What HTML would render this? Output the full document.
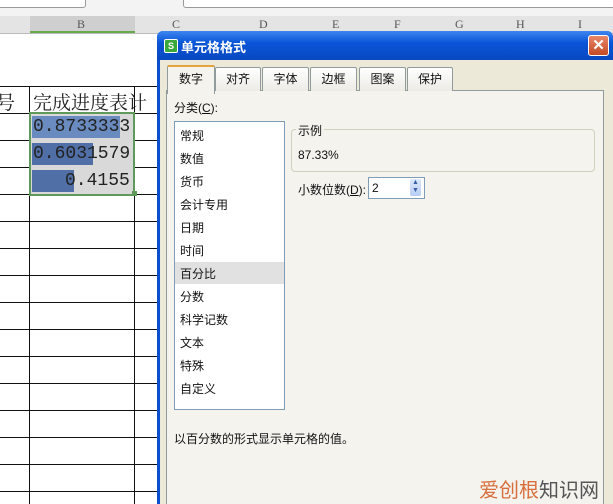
<!DOCTYPE html>
<html><head><meta charset="utf-8"><style>
html,body{margin:0;width:613px;height:504px;overflow:hidden;}
body{position:relative;background:#fff;font-family:"Liberation Sans","Noto Sans CJK SC",sans-serif;}
.a{position:absolute;}
.hl{position:absolute;height:1px;background:#111;}
.vl{position:absolute;width:1px;background:#111;}
.cjk{font-family:"Liberation Sans","Noto Sans CJK SC",sans-serif;font-size:12px;color:#111;}
.tab{position:absolute;top:67px;height:23px;border:1px solid #919b9c;border-bottom:none;background:linear-gradient(#fff,#ecebe5);font-size:12px;line-height:22px;text-align:center;border-radius:2px 2px 0 0;}
.item{position:absolute;left:5px;font-size:12px;color:#111;}
.mono{font-family:"Liberation Serif","Noto Serif CJK SC",serif;font-size:19px;color:#222;}
.num{font-family:"Liberation Mono",monospace;font-size:18px;color:#222;}
.col{position:absolute;top:17px;font-size:12px;color:#555;font-family:'Liberation Serif',serif;}
</style></head><body>
<div class="a" style="left:0;top:0;width:613px;height:16px;background:#f3f3f3;"></div>
<div class="a" style="left:-4px;top:-6px;width:88px;height:12px;border:1px solid #999;border-radius:3px;background:#fff;"></div>
<div class="a" style="left:183px;top:-6px;width:430px;height:12px;border:1px solid #999;border-radius:3px;background:#fff;"></div>
<div class="a" style="left:0;top:16px;width:613px;height:17px;background:#e4e4e4;border-bottom:1px solid #bbb;"></div>
<div class="a" style="left:30px;top:16px;width:105px;height:15px;background:#cfcfcf;border-bottom:2px solid #6aa84f;"></div>
<div class="col" style="left:77px;">B</div>
<div class="col" style="left:172px;">C</div>
<div class="col" style="left:259px;">D</div>
<div class="col" style="left:332px;">E</div>
<div class="col" style="left:394px;">F</div>
<div class="col" style="left:455px;">G</div>
<div class="col" style="left:516px;">H</div>
<div class="col" style="left:578px;">I</div>
<div class="vl" style="left:29px;top:86px;height:418px;"></div>
<div class="vl" style="left:134px;top:86px;height:418px;"></div>
<div class="hl" style="left:0;top:86px;width:160px;"></div>
<div class="hl" style="left:0;top:113px;width:160px;"></div>
<div class="hl" style="left:0;top:140px;width:160px;"></div>
<div class="hl" style="left:0;top:167px;width:160px;"></div>
<div class="hl" style="left:0;top:194px;width:160px;"></div>
<div class="hl" style="left:0;top:221px;width:160px;"></div>
<div class="hl" style="left:0;top:248px;width:160px;"></div>
<div class="hl" style="left:0;top:275px;width:160px;"></div>
<div class="hl" style="left:0;top:302px;width:160px;"></div>
<div class="hl" style="left:0;top:329px;width:160px;"></div>
<div class="hl" style="left:0;top:356px;width:160px;"></div>
<div class="hl" style="left:0;top:383px;width:160px;"></div>
<div class="hl" style="left:0;top:410px;width:160px;"></div>
<div class="hl" style="left:0;top:437px;width:160px;"></div>
<div class="hl" style="left:0;top:464px;width:160px;"></div>
<div class="hl" style="left:0;top:491px;width:160px;"></div>
<div class="a mono" style="left:-4px;top:88px;">号</div>
<div class="a mono" style="left:33px;top:88px;white-space:nowrap;">完成进度表计</div>
<div class="a" style="left:31px;top:114px;width:103px;height:80px;background:#d9d9d9;"></div>
<div class="a" style="left:32px;top:116px;width:88px;height:22px;background:#6a8bbf;"></div>
<div class="a" style="left:32px;top:143px;width:61px;height:22px;background:#4f6fa6;"></div>
<div class="a" style="left:32px;top:170px;width:42px;height:22px;background:#4f6fa6;"></div>
<div class="a num" style="left:33px;top:117px;">0.8733333</div>
<div class="a num" style="left:33px;top:144px;">0.6031579</div>
<div class="a num" style="left:65px;top:171px;">0.4155</div>
<div class="a" style="left:29px;top:112px;width:102px;height:80px;border:2px solid #5f9a5a;"></div>
<div class="a" style="left:132px;top:191px;width:5px;height:5px;background:#5f9a5a;"></div>
<div class="a" style="left:157px;top:31px;width:456px;height:473px;background:#0a4fd0;border-radius:6px 6px 0 0;"></div>
<div class="a" style="left:157px;top:31px;width:456px;height:29px;background:linear-gradient(#3d86f0,#0a55d8 40%,#0848c0);border-radius:6px 6px 0 0;"></div>
<div class="a" style="left:164px;top:39px;width:12px;height:12px;background:#3aa83a;border:1px solid #fff;border-radius:2px;color:#fff;font-size:9px;line-height:12px;text-align:center;font-weight:bold;">S</div>
<div class="a" style="left:181px;top:37px;color:#fff;font-size:13px;font-weight:bold;">单元格格式</div>
<div class="a" style="left:588px;top:35px;width:19px;height:19px;background:linear-gradient(#e8866a,#c44a25);border:1px solid #fff;border-radius:3px;color:#fff;font-size:15px;line-height:19px;text-align:center;font-weight:bold;">✕</div>
<div class="a" style="left:160px;top:60px;width:453px;height:444px;background:#ece9d8;"></div>
<div class="a" style="left:166px;top:90px;width:436px;height:420px;background:#f4f3ee;border:1px solid #919b9c;"></div>
<div class="tab cjk" style="left:215px;width:44px;">对齐</div>
<div class="tab cjk" style="left:262px;width:45px;">字体</div>
<div class="tab cjk" style="left:310px;width:45px;">边框</div>
<div class="tab cjk" style="left:359px;width:45px;">图案</div>
<div class="tab cjk" style="left:407px;width:44px;">保护</div>
<div class="tab cjk" style="left:167px;top:65px;width:46px;height:27px;background:#f4f3ee;border-top:2px solid #e6a23c;line-height:24px;">数字</div>
<div class="a cjk" style="left:174px;top:99px;">分类(<u>C</u>):</div>
<div class="a" style="left:174px;top:121px;width:109px;height:287px;background:#fff;border:1px solid #7f9db9;">
<div class="a" style="left:0;top:140px;width:109px;height:22px;background:#e1e1e1;"></div>
<div class="item" style="top:5px;">常规</div>
<div class="item" style="top:28px;">数值</div>
<div class="item" style="top:51px;">货币</div>
<div class="item" style="top:74px;">会计专用</div>
<div class="item" style="top:97px;">日期</div>
<div class="item" style="top:120px;">时间</div>
<div class="item" style="top:143px;">百分比</div>
<div class="item" style="top:166px;">分数</div>
<div class="item" style="top:189px;">科学记数</div>
<div class="item" style="top:212px;">文本</div>
<div class="item" style="top:235px;">特殊</div>
<div class="item" style="top:258px;">自定义</div>
</div>
<div class="a" style="left:291px;top:129px;width:302px;height:41px;border:1px solid #d0d0bf;border-radius:4px;"></div>
<div class="a cjk" style="left:296px;top:122px;background:#f4f3ee;padding:0 2px;">示例</div>
<div class="a cjk" style="left:298px;top:148px;">87.33%</div>
<div class="a cjk" style="left:298px;top:181px;">小数位数(<u>D</u>):</div>
<div class="a" style="left:368px;top:177px;width:55px;height:20px;background:#fff;border:1px solid #7f9db9;"></div>
<div class="a cjk" style="left:372px;top:181px;">2</div>
<div class="a" style="left:410px;top:179px;width:11px;height:17px;background:linear-gradient(#dde8fb,#b8cdf5);border-radius:2px;color:#3a5fa8;font-size:7px;line-height:8px;text-align:center;">▲<br>▼</div>
<div class="a cjk" style="left:174px;top:430px;">以百分数的形式显示单元格的值。</div>
<div class="a" style="left:479px;top:474px;font-size:20px;color:#555;font-family:'Noto Sans CJK SC',sans-serif;"><span style="color:#d86f3c;">爱创根</span>知识网</div>
</body></html>
